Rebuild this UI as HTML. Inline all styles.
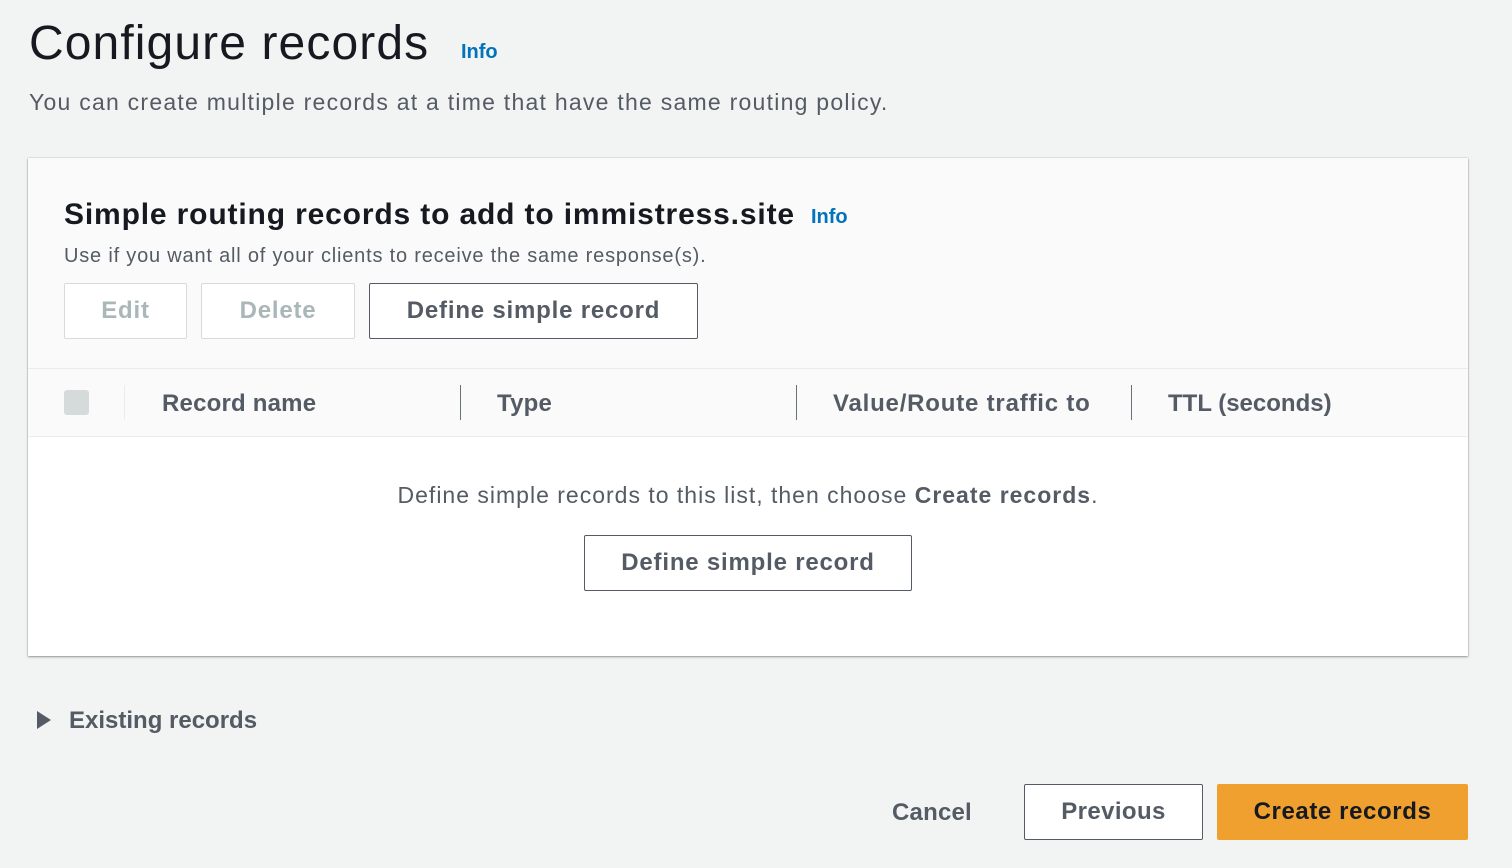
<!DOCTYPE html>
<html><head><style>
*{box-sizing:border-box;margin:0;padding:0}
body{width:1512px;height:868px;background:#f2f3f3;font-family:"Liberation Sans",sans-serif;color:#16191f;position:relative;overflow:hidden}
.abs{position:absolute;white-space:nowrap}
.info{color:#0073bb;font-weight:bold;font-size:20px}
.btn{position:absolute;border:1px solid #545b64;background:#fff;border-radius:2px;font-weight:bold;font-size:24px;color:#545b64;display:flex;align-items:center;justify-content:center;letter-spacing:0.8px}
.dis{border-color:#d5dbdb;color:#aab7b8}
.panel{position:absolute;left:28px;top:158px;width:1440px;height:498px;background:#fff;box-shadow:0 1px 2px rgba(0,28,36,.4),0 0 1px rgba(0,28,36,.3)}
.th{font-weight:bold;font-size:24px;color:#545b64;letter-spacing:0.2px}
.sep{position:absolute;top:385px;width:1px;height:35px;background:#687078}
</style></head><body>
<div class="abs" style="left:29px;top:16px;font-size:48px;letter-spacing:1.1px">Configure records</div>
<div class="abs info" style="left:461px;top:41px">Info</div>
<div class="abs" style="left:29px;top:89px;font-size:23px;color:#545b64;letter-spacing:1.25px">You can create multiple records at a time that have the same routing policy.</div>
<div class="panel">
 <div style="position:absolute;left:0;top:0;width:1440px;height:279px;background:#fafafa;border-bottom:1px solid #eaeded"></div>
 <div style="position:absolute;left:0;top:210px;width:1440px;height:69px;border-top:1px solid #eaeded"></div>
</div>
<div class="abs" style="left:64px;top:198px;font-size:30px;font-weight:bold;letter-spacing:0.85px">Simple routing records to add to immistress.site</div>
<div class="abs info" style="left:811px;top:206px">Info</div>
<div class="abs" style="left:64px;top:245px;font-size:20px;color:#545b64;letter-spacing:0.8px">Use if you want all of your clients to receive the same response(s).</div>
<div class="btn dis" style="left:64px;top:283px;width:123px;height:56px">Edit</div>
<div class="btn dis" style="left:201px;top:283px;width:154px;height:56px">Delete</div>
<div class="btn" style="left:369px;top:283px;width:329px;height:56px">Define simple record</div>
<div class="abs" style="left:64px;top:390px;width:25px;height:25px;background:#d5dbdb;border-radius:3px"></div>
<div class="sep" style="left:124px;background:#eaeded"></div>
<div class="abs th" style="left:162px;top:390px">Record name</div>
<div class="sep" style="left:460px"></div>
<div class="abs th" style="left:497px;top:390px">Type</div>
<div class="sep" style="left:796px"></div>
<div class="abs th" style="left:833px;top:390px;letter-spacing:0.8px">Value/Route traffic to</div>
<div class="sep" style="left:1131px"></div>
<div class="abs th" style="left:1168px;top:390px;letter-spacing:0px">TTL (seconds)</div>
<div class="abs" style="left:0;width:1496px;text-align:center;top:482px;font-size:23px;color:#545b64;letter-spacing:1px">Define simple records to this list, then choose <b>Create records</b>.</div>
<div class="btn" style="left:584px;top:535px;width:328px;height:56px">Define simple record</div>
<svg class="abs" style="left:37px;top:711px" width="16" height="18"><path d="M0 0 L14 9 L0 18Z" fill="#545b64"/></svg>
<div class="abs th" style="left:69px;top:707px;letter-spacing:0px">Existing records</div>
<div class="abs th" style="left:892px;top:799px">Cancel</div>
<div class="btn" style="left:1024px;top:784px;width:179px;height:56px;letter-spacing:0.4px">Previous</div>
<div class="btn" style="left:1217px;top:784px;width:251px;height:56px;background:#f0a02f;border-color:#f0a02f;color:#16191f;letter-spacing:0.6px">Create records</div>
</body></html>
